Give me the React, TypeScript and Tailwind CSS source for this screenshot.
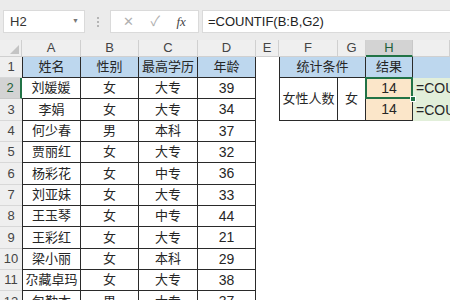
import React from "react";

const FONT = "font-['Liberation_Sans','Noto_Sans_CJK_SC',sans-serif]";

const ROWS: string[][] = [
  ["刘媛媛", "女", "大专", "39"],
  ["李娟", "女", "大专", "34"],
  ["何少春", "男", "本科", "37"],
  ["贾丽红", "女", "大专", "32"],
  ["杨彩花", "女", "中专", "36"],
  ["刘亚妹", "女", "大专", "33"],
  ["王玉琴", "女", "中专", "44"],
  ["王彩红", "女", "大专", "21"],
  ["梁小丽", "女", "本科", "29"],
  ["尕藏卓玛", "女", "大专", "38"],
  ["包勤本", "男", "大专", "37"],
];

const COLS = ["A", "B", "C", "D", "E", "F", "G", "H", ""];

// Chinese cells a bit smaller than numbers, like the sheet's default font
const cell = "flex items-center justify-center text-[13px] text-[#262626] border-[#2a2a2a]";
const num = "flex items-center justify-center text-[14px] text-[#262626] border-[#2a2a2a]";

export default function App() {
  return (
    <div className={`w-[450px] h-[300px] overflow-hidden bg-white ${FONT}`}>
      {/* Formula bar */}
      <div className="h-10 bg-[#ebebeb] flex items-start pt-[10px] pl-[3px]">
        <div className="w-[82px] h-[23px] bg-white border border-[#dadada] flex items-center justify-between pl-[6px] pr-[5px] text-[13px] text-[#333]">
          <span>H2</span>
          <span className="text-[7px] text-[#777]">▼</span>
        </div>
        <div className="w-[25px] h-[23px] flex flex-col items-center justify-center gap-[2px]">
          <div className="w-[2px] h-[2px] bg-[#b5b5b5]" />
          <div className="w-[2px] h-[2px] bg-[#b5b5b5]" />
          <div className="w-[2px] h-[2px] bg-[#b5b5b5]" />
        </div>
        <div className="w-[89px] h-[23px] bg-white border border-[#dadada] flex items-center justify-around px-[4px]">
          <span className="text-[13px] text-[#b0b0b0]">✕</span>
          <span className="text-[14px] text-[#b0b0b0]">✓</span>
          <span className="text-[13px] italic text-[#444] font-['Liberation_Serif',serif]">fx</span>
        </div>
        <div className="flex-1 ml-[3px] h-[23px] bg-white border border-[#dadada] border-r-0 flex items-center px-[5px] text-[13px] text-[#222]">
          =COUNTIF(B:B,G2)
        </div>
      </div>

      {/* Sheet */}
      <div className="grid grid-cols-[22px_59px_58px_59px_58px_23px_59px_28px_47px_1fr] grid-rows-[17px_21px_21px_22px_21px_21px_22px_21px_21px_22px_21px_21px_22px]">
        {/* column headers */}
        <div className="bg-[#efefef] border-b border-r border-[#d0d0d0] relative">
          <div className="absolute right-[2px] bottom-[2px] w-0 h-0 border-l-[9px] border-l-transparent border-b-[9px] border-b-[#c4c4c4]" />
        </div>
        {COLS.map((c, i) =>
          c === "H" ? (
            <div
              key={i}
              className="bg-[#d3d3d3] border-b-2 border-b-[#217346] border-r border-r-[#c8c8c8] flex items-center justify-center text-[13px] text-[#1f5f3a]"
            >
              {c}
            </div>
          ) : (
            <div
              key={i}
              className="bg-[#efefef] border-b border-r border-[#d0d0d0] flex items-center justify-center text-[13px] text-[#444]"
            >
              {c}
            </div>
          )
        )}

        {/* row 1 */}
        <div className="bg-[#efefef] border-b border-[#d8d8d8] flex items-center justify-center text-[13px] text-[#444]">1</div>
        <div className={`${cell} bg-[#bdd7ee] border-l border-r border-b`}>姓名</div>
        <div className={`${cell} bg-[#bdd7ee] border-r border-b`}>性别</div>
        <div className={`${cell} bg-[#bdd7ee] border-r border-b`}>最高学历</div>
        <div className={`${cell} bg-[#bdd7ee] border-r border-b`}>年龄</div>
        <div />
        <div className={`${cell} col-span-2 bg-[#bdd7ee] border-l border-r border-b`}>统计条件</div>
        <div className={`${cell} bg-[#bdd7ee] border-r border-b`}>结果</div>
        <div className="bg-[#bdd7ee]" />

        {ROWS.map((r, i) => {
          const n = i + 2;
          return (
            <React.Fragment key={n}>
              {n === 2 ? (
                <div className="bg-[#d3d3d3] border-b border-[#c8c8c8] border-r-2 border-r-[#217346] flex items-center justify-center text-[13px] text-[#1f5f3a]">
                  {n}
                </div>
              ) : (
                <div className="bg-[#efefef] border-b border-[#d8d8d8] flex items-center justify-center text-[13px] text-[#444]">
                  {n}
                </div>
              )}
              <div className={`${cell} ${n === 2 ? "" : "border-l"} border-r border-b`}>{r[0]}</div>
              <div className={`${cell} border-r border-b`}>{r[1]}</div>
              <div className={`${cell} border-r border-b`}>{r[2]}</div>
              <div className={`${num} border-r border-b`}>{r[3]}</div>
              <div />
              {n === 2 && (
                <>
                  <div className={`${cell} row-span-2 border-l border-r border-b`}>女性人数</div>
                  <div className={`${cell} row-span-2 border-r border-b`}>女</div>
                  <div className={`${num} relative bg-[#fbe6c9] border-r border-b`}>
                    14
                    <div className="absolute -left-px -top-px -right-px -bottom-px border-2 border-[#217346]" />
                    <div className="absolute -right-[4px] -bottom-[4px] w-[6px] h-[6px] bg-[#217346] border border-white" />
                  </div>
                  <div className="bg-[#e2efda] flex items-center pl-[3px] text-[14px] text-[#262626] whitespace-nowrap overflow-hidden">
                    =COUNTIF(B:B,G2)
                  </div>
                </>
              )}
              {n === 3 && (
                <>
                  <div className={`${num} bg-[#fbe6c9] border-r border-b`}>14</div>
                  <div className="bg-[#e2efda] flex items-center pl-[3px] text-[14px] text-[#262626] whitespace-nowrap overflow-hidden">
                    =COUNTIF(B:B,G3)
                  </div>
                </>
              )}
              {n > 3 && (
                <>
                  <div />
                  <div />
                  <div />
                  <div />
                </>
              )}
            </React.Fragment>
          );
        })}
      </div>
    </div>
  );
}
